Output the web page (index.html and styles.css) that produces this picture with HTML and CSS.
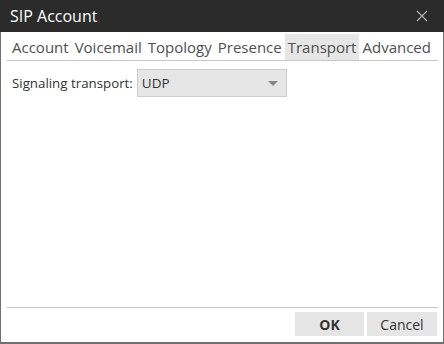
FILE: index.html
```html
<!DOCTYPE html>
<html lang="en">
<head>
    <meta charset="UTF-8">
    <title>SIP Account</title>
    <link rel="stylesheet" href="styles.css">
</head>
<body>
    <div class="window">
        <div class="titlebar">
            <span class="title">SIP Account</span>
            <svg class="close" width="12" height="12" viewBox="0 0 12 12">
                <path d="M1 1 L11 11 M11 1 L1 11" stroke="#b4b4b4" stroke-width="1.1" fill="none"/>
            </svg>
        </div>
        <div class="tabs">
            <span class="tab">Account</span>
            <span class="tab">Voicemail</span>
            <span class="tab">Topology</span>
            <span class="tab">Presence</span>
            <span class="tab active">Transport</span>
            <span class="tab">Advanced</span>
        </div>
        <div class="content">
            <div class="field">
                <label>Signaling transport:</label>
                <div class="select">
                    <span>UDP</span>
                    <span class="arrow"></span>
                </div>
            </div>
        </div>
        <div class="footer">
            <button class="btn btn-ok">OK</button>
            <button class="btn">Cancel</button>
        </div>
    </div>
</body>
</html>
```

FILE: styles.css
```css
body {
    margin: 0;
    font-family: 'Open Sans', 'Noto Sans', sans-serif;
    background: #ffffff;
}

.window {
    display: flex;
    flex-direction: column;
    height: 344px;
    box-sizing: border-box;
    border: 1px solid #707070;
    border-top: 0;
    border-bottom-width: 2px;
    background: #ffffff;
}

.titlebar {
    height: 32px;
    margin: 0 -1px;
    background: #2b2b2b;
    color: #ffffff;
    display: flex;
    align-items: center;
    justify-content: space-between;
    padding: 0 16px 0 10px;
}

.title {
    font-size: 16px;
}

.close {
    display: block;
}

.tabs {
    display: flex;
    margin: 2px 5px 0 6px;
    padding-left: 2px;
    border-bottom: 1px solid #c8c8c8;
}

.tab {
    padding: 0 3px;
    height: 26px;
    line-height: 26px;
    font-size: 15px;
    color: #505050;
}

.tab.active {
    background: #e6e6e6;
}

.content {
    flex: 1;
    padding: 8px 11px;
}

.field {
    display: flex;
    align-items: center;
    gap: 4px;
}

.field label {
    font-size: 13.3px;
    color: #333333;
}

.select {
    width: 150px;
    height: 28px;
    box-sizing: border-box;
    border: 1px solid #cccccc;
    background: #e6e6e6;
    display: flex;
    align-items: center;
    justify-content: space-between;
    padding: 0 8px 0 4px;
    font-size: 13.5px;
    color: #333333;
}

.arrow {
    width: 0;
    height: 0;
    border-left: 5px solid transparent;
    border-right: 5px solid transparent;
    border-top: 5px solid #888888;
}

.footer {
    display: flex;
    justify-content: flex-end;
    gap: 3px;
    margin: 0 5px 0 6px;
    padding: 4px 1px 6px 0;
    border-top: 1px solid #c8c8c8;
}

.btn {
    width: 70px;
    height: 24px;
    border: 0;
    background: #e6e6e6;
    font-family: inherit;
    font-size: 14px;
    color: #333333;
    padding: 0;
}

.btn-ok {
    width: 69px;
    font-weight: bold;
}
```
